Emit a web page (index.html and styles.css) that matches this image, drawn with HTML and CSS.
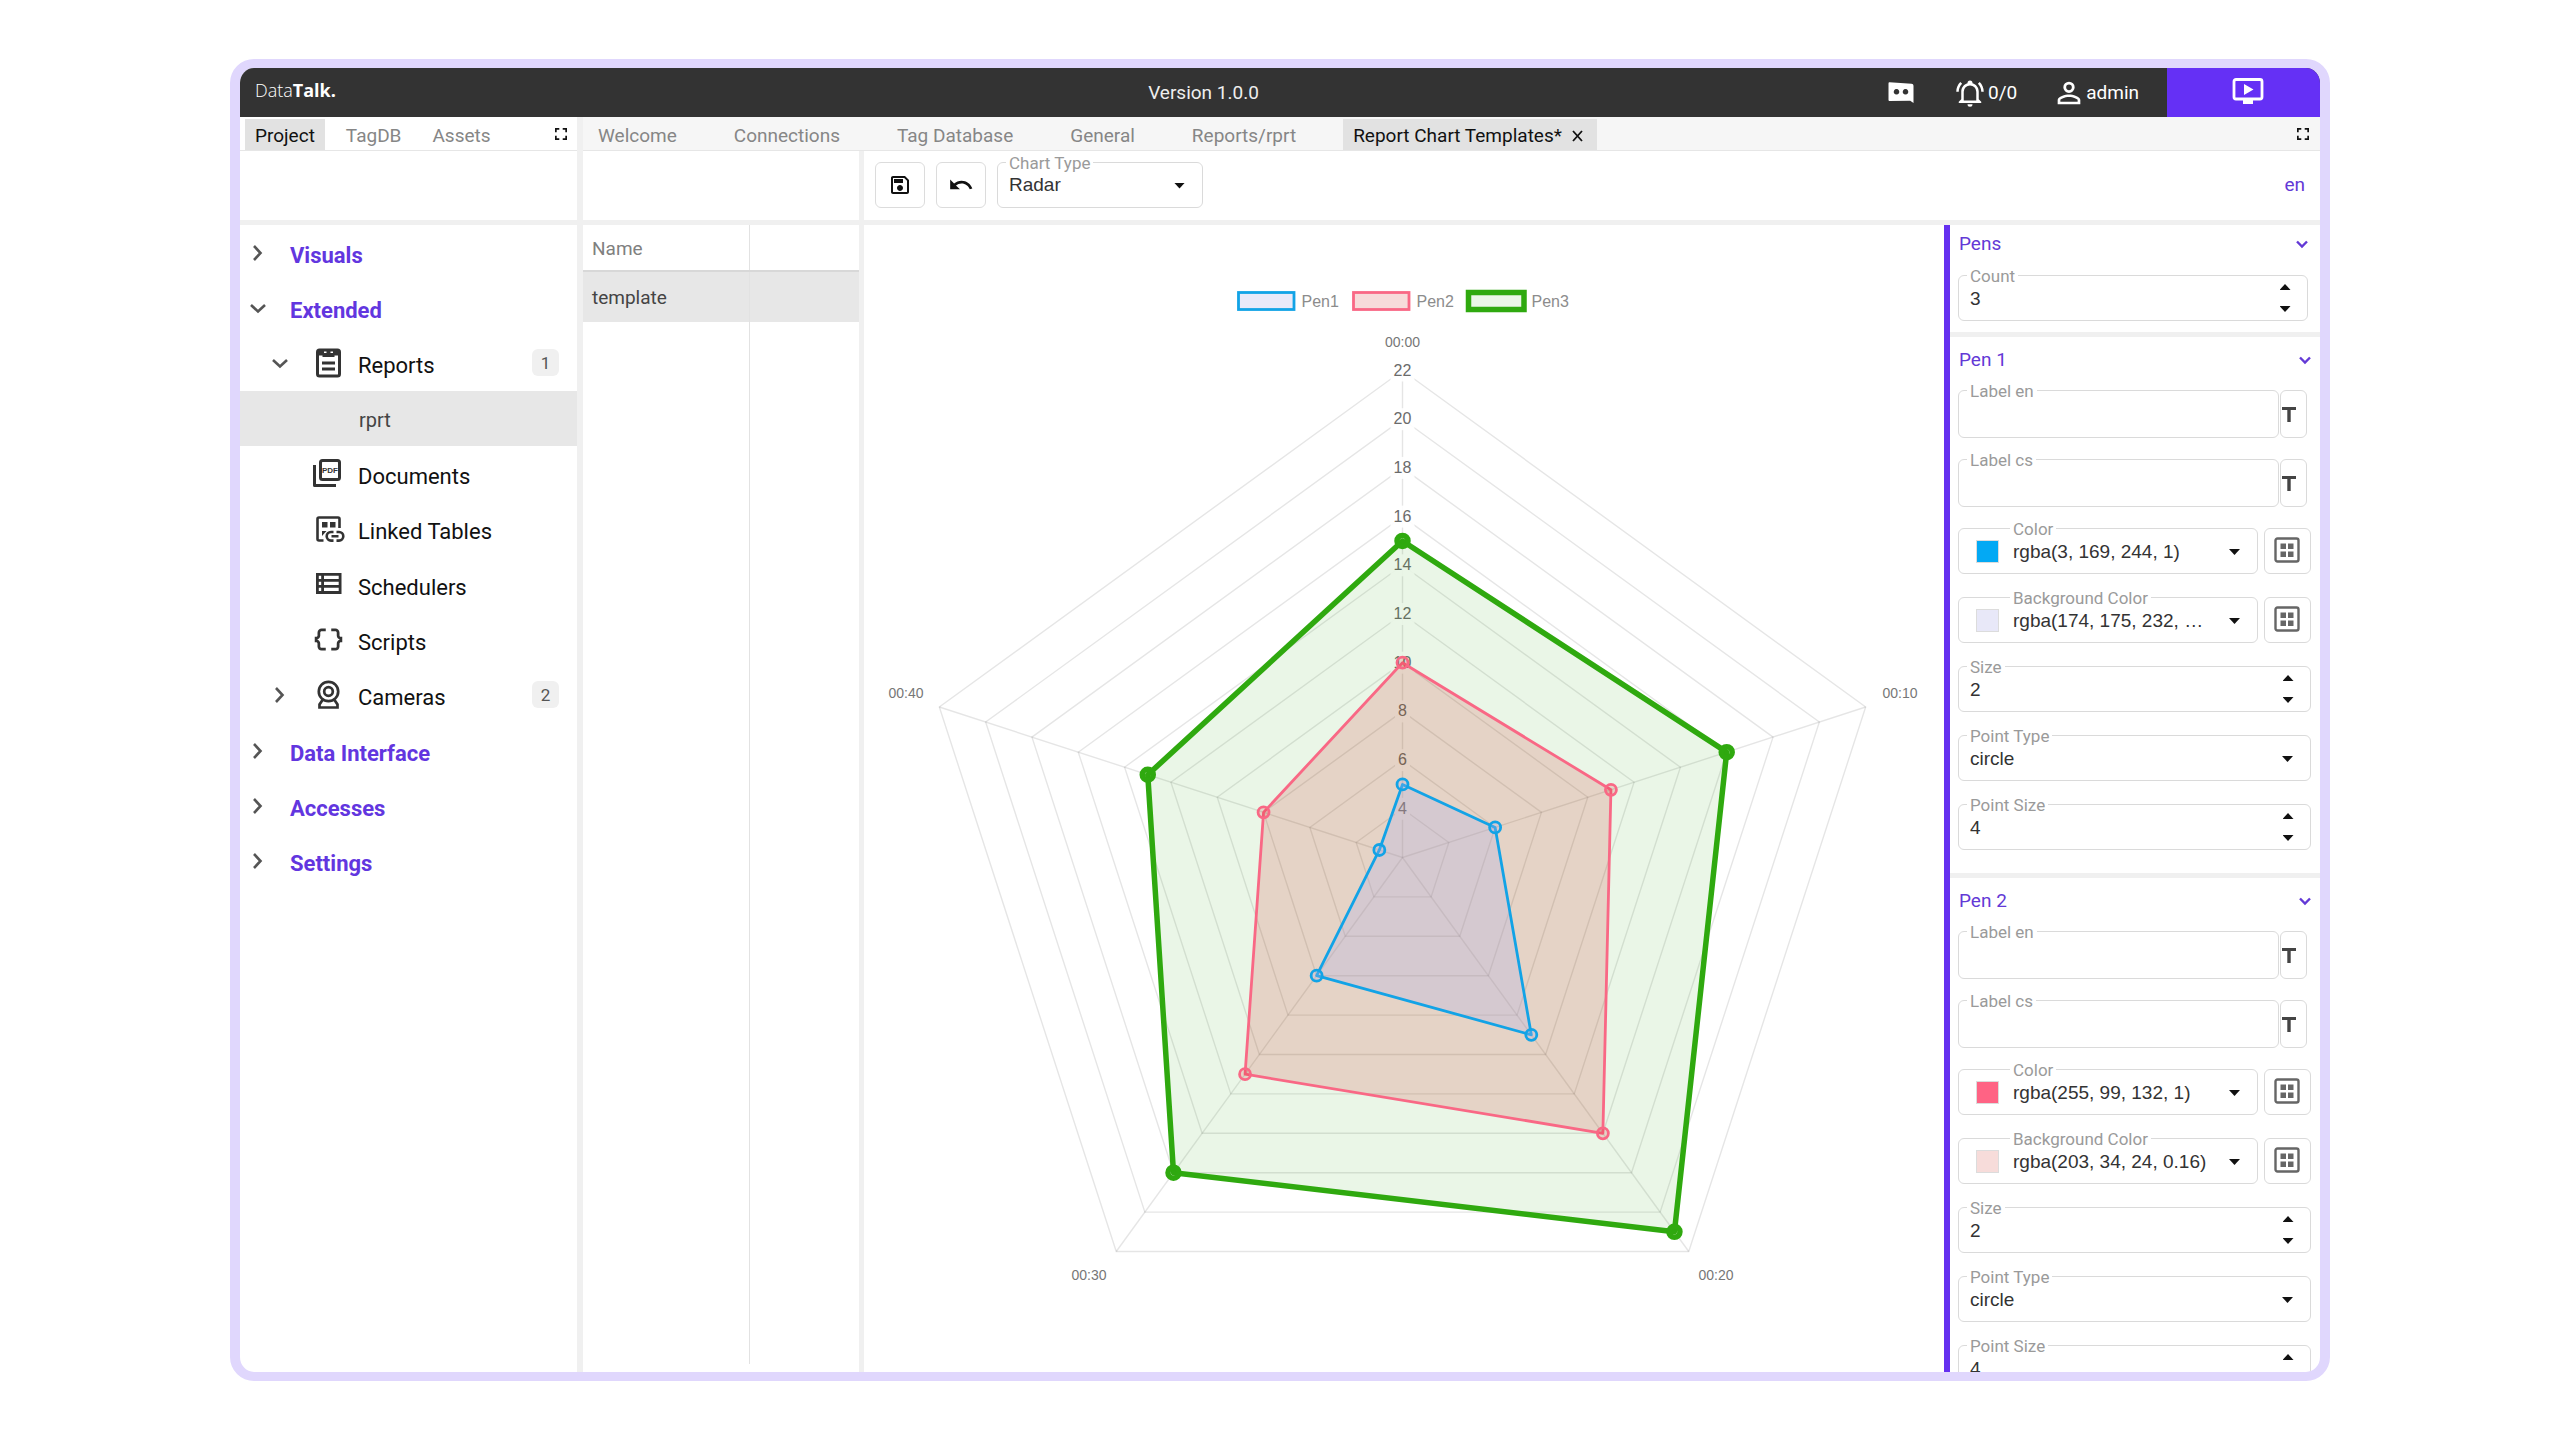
FILE: index.html
```html
<!DOCTYPE html>
<html lang="en">
<head>
<meta charset="utf-8">
<title>DataTalk – Report Chart Templates</title>
<link rel="stylesheet" href="styles.css">
</head>
<body>
<svg class="sprite" aria-hidden="true">
  <symbol id="i-right" viewBox="0 0 24 24"><path d="M8 5l6.500 7L8 19" fill="none" stroke="currentColor" stroke-width="2.600"/></symbol>
  <symbol id="i-down" viewBox="0 0 24 24"><path d="M5 9l7 6.500L19 9" fill="none" stroke="currentColor" stroke-width="2.600"/></symbol>
  <symbol id="i-fold" viewBox="0 0 12 12"><path d="M1 3.500l5 5 5-5" fill="none" stroke="currentColor" stroke-width="2.400"/></symbol>
  <symbol id="i-full" viewBox="5 5 14 14"><path d="M5 5h5v2H7v3H5V5m9 0h5v5h-2V7h-3V5m3 9h2v5h-5v-2h3v-3m-7 3v2H5v-5h2v3h3z" fill="currentColor"/></symbol>
  <symbol id="i-grid" viewBox="0 0 26 26"><rect x="1.500" y="1.500" width="23" height="23" rx="2" fill="none" stroke="currentColor" stroke-width="2.400"/><path d="M6.500 6.500h5.500v5.500H6.500zM14 6.500h5.500v5.500H14zM6.500 14.500h5.500V20H6.500zM14 14.500h5.500V20H14z" fill="currentColor"/></symbol>
  <symbol id="i-t" viewBox="0 0 14 15"><path d="M0 0h14v3H8.700v12H5.300V3H0z" fill="currentColor"/></symbol>
</svg>

<div class="app">
  <header class="topbar">
    <div class="topbar-main">
      <a class="logo" href="#">Data<b>Talk.</b></a>
      <span class="version">Version 1.0.0</span>
      <div class="status">
        <button class="status-item" aria-label="Messages">
          <svg width="26" height="21" viewBox="0 0 26 21"><path fill-rule="evenodd" fill="currentColor" d="M1.500.3L23.500 1.700q2 .1 2 2V21l-3.300-2.200L1.500 19Q.5 19 .5 18V1.500Q.5.200 1.500.3zM8.500 7a2.800 2.800 0 1 0 .01 0zM17.500 7a2.800 2.800 0 1 0 .01 0z"/></svg>
        </button>
        <button class="status-item alarms">
          <svg width="30" height="30" viewBox="0 0 24 24"><path fill="currentColor" d="M10,21H14A2,2 0 0,1 12,23A2,2 0 0,1 10,21M21,19V20H3V19L5,17V11C5,7.900 7.030,5.170 10,4.290C10,4.190 10,4.100 10,4A2,2 0 0,1 12,2A2,2 0 0,1 14,4C14,4.100 14,4.190 14,4.290C16.970,5.170 19,7.900 19,11V17L21,19M17,11A5,5 0 0,0 12,6A5,5 0 0,0 7,11V18H17V11M19.750,3.190L18.330,4.610C20.040,6.300 21,8.600 21,11H23C23,8.070 21.840,5.250 19.750,3.190M1,11H3C3,8.600 3.960,6.300 5.670,4.610L4.250,3.190C2.160,5.250 1,8.070 1,11Z"/></svg>
          <span>0/0</span>
        </button>
        <button class="status-item user">
          <svg width="34" height="34" viewBox="0 0 24 24"><path fill="currentColor" d="M12,4A4,4 0 0,1 16,8A4,4 0 0,1 12,12A4,4 0 0,1 8,8A4,4 0 0,1 12,4M12,6A2,2 0 0,0 10,8A2,2 0 0,0 12,10A2,2 0 0,0 14,8A2,2 0 0,0 12,6M12,13C14.670,13 20,14.330 20,17V20H4V17C4,14.330 9.330,13 12,13M12,14.900C9.030,14.900 5.900,16.360 5.900,17V18.100H18.100V17C18.100,16.360 14.970,14.900 12,14.900Z"/></svg>
          <span>admin</span>
        </button>
      </div>
    </div>
    <button class="run" aria-label="Run">
      <svg width="32" height="26" viewBox="0 0 32 26"><rect x="2" y="1.500" width="28" height="19.500" rx="2" fill="none" stroke="currentColor" stroke-width="2.800"/><path d="M11 22h10v4H11zM12 6l9.500 5.500L12 17z" fill="currentColor"/></svg>
    </button>
  </header>

  <div class="workspace">
    <aside class="sidebar">
      <nav class="tabs side-tabs">
        <button class="tab active">Project</button>
        <button class="tab">TagDB</button>
        <button class="tab">Assets</button>
        <button class="full" aria-label="Full screen"><svg width="12" height="12"><use href="#i-full"/></svg></button>
      </nav>
      <div class="toolbar"></div>
      <ul class="tree">
        <li class="group"><svg class="chev"><use href="#i-right"/></svg><span>Visuals</span></li>
        <li class="group"><svg class="chev"><use href="#i-down"/></svg><span>Extended</span></li>
        <li class="item"><svg class="chev"><use href="#i-down"/></svg>
          <svg class="ico" viewBox="0 0 33 33"><rect x="5.500" y="3" width="22" height="26" rx="2" fill="none" stroke="currentColor" stroke-width="3"/><path d="M6 3h6v3h2.500V3.500h4V6H21V3h7v5.500h-5.500V10h-12V8.500H6z" fill="currentColor"/><path d="M10 16h13M10 22h13" stroke="currentColor" stroke-width="2.800"/></svg>
          <span>Reports</span><em class="badge">1</em></li>
        <li class="item leaf selected"><span>rprt</span></li>
        <li class="item"><i class="chev"></i>
          <svg class="ico" viewBox="0 0 33 33"><rect x="8.500" y="3.500" width="19" height="19" rx="2" fill="none" stroke="currentColor" stroke-width="3"/><path d="M2.500 8v20.500H24" fill="none" stroke="currentColor" stroke-width="3" stroke-linejoin="round"/><text x="18" y="16" text-anchor="middle" class="pdf">PDF</text></svg>
          <span>Documents</span></li>
        <li class="item"><i class="chev"></i>
          <svg class="ico" viewBox="0 0 33 33"><path d="M11.500 27.500H7q-1.500 0-1.500-1.500V6Q5.500 4.500 7 4.500h19q1.500 0 1.500 1.500v9" fill="none" stroke="currentColor" stroke-width="2.600"/><path d="M10 9h5.500v5.500H10zM18 9h5.500v5.500H18zM10 18h4.500L10 23z" fill="currentColor"/><path d="M21.500 19H19a4.300 4.300 0 0 0 0 8.600h2.500M24.500 19H27a4.300 4.300 0 0 1 0 8.600h-2.500M19.500 23.300h7" fill="none" stroke="currentColor" stroke-width="2.600"/></svg>
          <span>Linked Tables</span></li>
        <li class="item"><i class="chev"></i>
          <svg class="ico" viewBox="0 0 33 33"><path fill-rule="evenodd" fill="currentColor" d="M4 5h25.500v21H4zM6.800 7.700v3.300h2.400V7.700zM12 7.700v3.300h14.700V7.700zM6.800 13.700V17h2.400v-3.300zM12 13.700V17h14.700v-3.300zM6.800 19.700V23h2.400v-3.300zM12 19.700V23h14.700v-3.300z"/></svg>
          <span>Schedulers</span></li>
        <li class="item"><i class="chev"></i>
          <svg class="ico" viewBox="0 0 24 24"><path fill="currentColor" d="M4 7v2c0 .55-.45 1-1 1H2v4h1c.55 0 1 .45 1 1v2c0 1.650 1.350 3 3 3h3v-2H7c-.55 0-1-.45-1-1v-2c0-1.300-.84-2.420-2-2.830v-.34C5.160 11.420 6 10.300 6 9V7c0-.55.45-1 1-1h3V4H7C5.350 4 4 5.350 4 7zm17 3c-.55 0-1-.45-1-1V7c0-1.650-1.350-3-3-3h-3v2h3c.55 0 1 .45 1 1v2c0 1.300.84 2.420 2 2.830v.34c-1.160.41-2 1.520-2 2.830v2c0 .55-.45 1-1 1h-3v2h3c1.650 0 3-1.350 3-3v-2c0-.55.45-1 1-1h1v-4h-1z"/></svg>
          <span>Scripts</span></li>
        <li class="item"><svg class="chev"><use href="#i-right"/></svg>
          <svg class="ico" viewBox="0 0 33 33"><g fill="none" stroke="currentColor" stroke-width="2.700"><circle cx="16.500" cy="12.500" r="9.700"/><circle cx="16.500" cy="12.500" r="4.300"/><path d="M10.500 21L7.500 25.500v3h18v-3L22.500 21"/></g></svg>
          <span>Cameras</span><em class="badge">2</em></li>
        <li class="group"><svg class="chev"><use href="#i-right"/></svg><span>Data Interface</span></li>
        <li class="group"><svg class="chev"><use href="#i-right"/></svg><span>Accesses</span></li>
        <li class="group"><svg class="chev"><use href="#i-right"/></svg><span>Settings</span></li>
      </ul>
    </aside>

    <main class="main">
      <nav class="tabs main-tabs">
        <button class="tab">Welcome</button>
        <button class="tab">Connections</button>
        <button class="tab">Tag Database</button>
        <button class="tab">General</button>
        <button class="tab">Reports/rprt</button>
        <button class="tab active">Report Chart Templates*
          <svg width="11" height="12" viewBox="0 0 11 12"><path d="M1 1l9 10M10 1L1 11" stroke="currentColor" stroke-width="1.800"/></svg></button>
        <button class="full" aria-label="Full screen"><svg width="12" height="12"><use href="#i-full"/></svg></button>
      </nav>
      <div class="panes">
        <section class="list">
          <div class="toolbar"></div>
          <div class="table-wrap">
            <table>
              <thead><tr><th>Name</th><th></th></tr></thead>
              <tbody>
                <tr class="selected"><td>template</td><td></td></tr>
                <tr class="rest"><td></td><td></td></tr>
              </tbody>
            </table>
          </div>
        </section>
        <section class="editor">
          <div class="toolbar">
            <button class="tool" aria-label="Save"><svg width="24" height="24" viewBox="0 0 24 24"><path fill="currentColor" d="M17 3H5C3.890 3 3 3.900 3 5V19C3 20.100 3.890 21 5 21H19C20.100 21 21 20.100 21 19V7L17 3M19 19H5V5H16.170L19 7.830V19M12 12C10.340 12 9 13.340 9 15S10.340 18 12 18 15 16.660 15 15 13.660 12 12 12M6 6H15V10H6V6Z"/></svg></button>
            <button class="tool" aria-label="Undo"><svg width="26" height="26" viewBox="0 0 24 24"><path fill="currentColor" d="M12.500,8C9.850,8 7.450,9 5.600,10.600L2,7V16H11L7.380,12.380C8.770,11.220 10.540,10.500 12.500,10.500C16.040,10.500 19.050,12.810 20.100,16L22.470,15.220C21.080,11.030 17.150,8 12.500,8Z"/></svg></button>
            <div class="field chart-type"><label for="ctype">Chart Type</label><select id="ctype"><option>Radar</option></select><i class="caret"></i></div>
            <a class="lang" href="#">en</a>
          </div>
          <div class="canvas-row">
            <div class="chart"><svg id="radar" viewBox="0 0 1080 1147"></svg></div>
            <form class="props">
              <section class="sect sect-first">
                <h2>Pens<svg width="12" height="12"><use href="#i-fold"/></svg></h2>
                <div class="rows">
                  <div class="row"><div class="field"><label for="count">Count</label><input id="count" type="number" value="3"><span class="steps"><button type="button" aria-label="More"><i class="caret up"></i></button><button type="button" aria-label="Less"><i class="caret"></i></button></span></div></div>
                </div>
              </section>
              <section class="sect">
                <h2>Pen 1<svg width="12" height="12"><use href="#i-fold"/></svg></h2>
                <div class="rows">
                  <div class="row text-row"><div class="field"><label for="p1en">Label en</label><input id="p1en" type="text"></div><button type="button" class="tbtn" aria-label="Text"><svg width="14" height="15"><use href="#i-t"/></svg></button></div>
                  <div class="row text-row"><div class="field"><label for="p1cs">Label cs</label><input id="p1cs" type="text"></div><button type="button" class="tbtn" aria-label="Text"><svg width="14" height="15"><use href="#i-t"/></svg></button></div>
                  <div class="row"><div class="field color"><label for="p1c">Color</label><i class="swatch blue"></i><select id="p1c"><option>rgba(3, 169, 244, 1)</option></select><i class="caret"></i></div><button type="button" class="gbtn" aria-label="Palette"><svg width="26" height="26"><use href="#i-grid"/></svg></button></div>
                  <div class="row"><div class="field color"><label for="p1b">Background Color</label><i class="swatch lilac"></i><select id="p1b"><option>rgba(174, 175, 232, 0.28)</option></select><i class="caret"></i></div><button type="button" class="gbtn" aria-label="Palette"><svg width="26" height="26"><use href="#i-grid"/></svg></button></div>
                  <div class="row"><div class="field"><label for="p1s">Size</label><input id="p1s" type="number" value="2"><span class="steps"><button type="button" aria-label="More"><i class="caret up"></i></button><button type="button" aria-label="Less"><i class="caret"></i></button></span></div></div>
                  <div class="row"><div class="field"><label for="p1t">Point Type</label><select id="p1t"><option>circle</option></select><i class="caret"></i></div></div>
                  <div class="row"><div class="field"><label for="p1p">Point Size</label><input id="p1p" type="number" value="4"><span class="steps"><button type="button" aria-label="More"><i class="caret up"></i></button><button type="button" aria-label="Less"><i class="caret"></i></button></span></div></div>
                </div>
              </section>
              <section class="sect">
                <h2>Pen 2<svg width="12" height="12"><use href="#i-fold"/></svg></h2>
                <div class="rows">
                  <div class="row text-row"><div class="field"><label for="p2en">Label en</label><input id="p2en" type="text"></div><button type="button" class="tbtn" aria-label="Text"><svg width="14" height="15"><use href="#i-t"/></svg></button></div>
                  <div class="row text-row"><div class="field"><label for="p2cs">Label cs</label><input id="p2cs" type="text"></div><button type="button" class="tbtn" aria-label="Text"><svg width="14" height="15"><use href="#i-t"/></svg></button></div>
                  <div class="row"><div class="field color"><label for="p2c">Color</label><i class="swatch pink"></i><select id="p2c"><option>rgba(255, 99, 132, 1)</option></select><i class="caret"></i></div><button type="button" class="gbtn" aria-label="Palette"><svg width="26" height="26"><use href="#i-grid"/></svg></button></div>
                  <div class="row"><div class="field color"><label for="p2b">Background Color</label><i class="swatch rose"></i><select id="p2b"><option>rgba(203, 34, 24, 0.16)</option></select><i class="caret"></i></div><button type="button" class="gbtn" aria-label="Palette"><svg width="26" height="26"><use href="#i-grid"/></svg></button></div>
                  <div class="row"><div class="field"><label for="p2s">Size</label><input id="p2s" type="number" value="2"><span class="steps"><button type="button" aria-label="More"><i class="caret up"></i></button><button type="button" aria-label="Less"><i class="caret"></i></button></span></div></div>
                  <div class="row"><div class="field"><label for="p2t">Point Type</label><select id="p2t"><option>circle</option></select><i class="caret"></i></div></div>
                  <div class="row"><div class="field"><label for="p2p">Point Size</label><input id="p2p" type="number" value="4"><span class="steps"><button type="button" aria-label="More"><i class="caret up"></i></button><button type="button" aria-label="Less"><i class="caret"></i></button></span></div></div>
                </div>
              </section>
            </form>
          </div>
        </section>
      </div>
    </main>
  </div>
</div>
<script src="radar.js"></script>
</body>
</html>
```
FILE: styles.css
```css
* { box-sizing: border-box; }

body {
  margin: 0;
  height: 100vh;
  padding: 59px 230px;
  background: #fff;
  color: #111;
  font: 19px/24px Roboto, "Liberation Sans", sans-serif;
}

button, input, select {
  font: inherit;
  color: inherit;
  background: none;
  border: 0;
  border-radius: 0;
  margin: 0;
  padding: 0;
  outline: 0;
}
i, em { font-style: normal; }
a { text-decoration: none; }
svg { display: block; flex: none; }
.sprite { position: absolute; width: 0; height: 0; }

.app {
  height: 100%;
  display: flex;
  flex-direction: column;
  border: solid #e0d7fd;
  border-width: 9px 10px;
  border-radius: 24px;
  overflow: hidden;
}

/* top bar */
.topbar { display: flex; flex: none; height: 49px; background: #333; color: #fff; }
.topbar-main {
  flex: 1;
  display: grid;
  grid-template-columns: 1fr auto 1fr;
  align-items: center;
  padding: 0 15px;
}
.logo { color: #fff; font: 300 18px/24px "Open Sans", sans-serif; padding-bottom: 6px; }
.logo b { font-weight: 700; }
.version { color: #eee; }
.status { display: flex; justify-content: flex-end; align-items: center; margin-right: 13px; }
.status-item { display: flex; align-items: center; gap: 3px; height: 32px; color: #fff; }
.status-item.alarms { margin-left: 41px; }
.status-item.user { gap: 0; margin-left: 35px; }
.run { width: 153px; display: flex; justify-content: center; align-items: center; padding: 0 0 4px 8px; background: #6530f5; color: #fff; }

/* shell */
.workspace { flex: 1; min-height: 0; display: flex; }
.sidebar { width: 343px; flex: none; border-right: 6px solid #f0f0f0; }
.main { flex: 1; min-width: 0; display: flex; flex-direction: column; }

.tabs { display: flex; flex: none; height: 34px; padding-top: 2px; border-bottom: 1px solid #e6e6e6; }
.tab { display: flex; align-items: center; padding: 2px 10px 0; color: #868686; white-space: nowrap; }
.tab.active { background: #e2e2e2; color: #111; }
.side-tabs { gap: 11px; padding-left: 5px; padding-right: 10px; }
.main-tabs { gap: 12px; padding-left: 5px; padding-right: 11px; background: #f6f6f6; }
.main-tabs .tab { padding-right: 35px; }
.main-tabs .tab.active { padding-right: 14px; gap: 10px; }
.full { margin-left: auto; padding-bottom: 2px; color: #111; }

.toolbar { display: flex; align-items: center; gap: 11px; height: 74px; flex: none; padding: 0 15px 2px 11px; border-bottom: 5px solid #f0f0f0; }
.tool { width: 50px; height: 46px; display: flex; align-items: center; justify-content: center; border: 1px solid #dcdcdc; border-radius: 6px; color: #111; }
.lang { margin-left: auto; color: #6339d6; }

/* tree */
.tree { list-style: none; margin: 0; padding: 0; height: 664px; display: grid; grid-auto-rows: 1fr; font-size: 22px; line-height: 28px; }
.tree li { display: flex; align-items: center; }
.chev { width: 24px; height: 24px; color: #555; flex: none; }
.ico { width: 33px; height: 33px; color: #333; margin-left: 20px; }
.pdf { font: 700 8px "Liberation Sans", sans-serif; fill: currentColor; }
.group { padding-left: 6px; gap: 20px; color: #6236df; font-weight: 700; }
.group span { padding-top: 6px; }
.item { padding-left: 28px; padding-right: 18px; color: #111; }
.item span { padding: 6px 0 0 13px; }
.tree .leaf { padding-left: 106px; font-size: 20px; color: #444; }
.leaf span { padding-top: 3px; }
.selected { background: #e7e7e7; }
.badge { margin-left: auto; margin-bottom: 2px; width: 27px; height: 27px; border-radius: 6px; background: #f0f0f0; color: #555; font-size: 17px; line-height: 28px; text-align: center; }

/* list */
.panes { flex: 1; min-height: 0; display: flex; }
.list { width: 281px; flex: none; display: flex; flex-direction: column; border-right: 5px solid #f0f0f0; }
.table-wrap { flex: 1; padding-bottom: 8px; display: flex; }
table { width: 100%; border-collapse: collapse; table-layout: fixed; }
th, td { text-align: left; font-weight: 400; padding: 2px 9px 0; color: #444; }
th:first-child, td:first-child { width: 166px; border-right: 1px solid #e2e2e2; }
th { height: 46px; color: #808080; border-bottom: 2px solid #d8d8d8; }
tr.selected td { height: 51px; }

/* editor */
.editor { flex: 1; min-width: 0; display: flex; flex-direction: column; }
.canvas-row { flex: 1; min-height: 0; display: flex; }
.chart { flex: 1; min-width: 0; }
.chart svg { width: 100%; height: 100%; }
.chart text { font-family: "Liberation Sans", sans-serif; text-anchor: middle; }
.grid-line { fill: none; stroke: #000; stroke-opacity: .1; stroke-width: 1.400; }
.tick-back { fill: #fff; fill-opacity: .9; }
.tick { font-size: 16px; fill: #6b6b6b; }
.axis { font-size: 14px; fill: #777; }
.chart .legend { font-size: 16px; fill: #8c8c8c; text-anchor: start; }

.props { width: 376px; flex: none; border-left: 6px solid #6530f0; overflow: hidden; }
.sect { border-bottom: 5px solid #f0f0f0; padding: 0 9px 0 8px; }
.sect h2 { display: flex; align-items: center; justify-content: space-between; margin: 0; height: 53px; padding: 0 0 8px 1px; font-size: 19px; font-weight: 400; color: #6339d6; }
.sect-first { padding-right: 12px; }
.sect-first h2 { height: 50px; padding-bottom: 12px; }
.rows { display: grid; grid-template-columns: minmax(0, 1fr); grid-auto-rows: 69px; }
.sect-first .rows { grid-auto-rows: 57px; }
.row { display: flex; align-items: flex-start; gap: 6px; }
.text-row { gap: 1px; padding-right: 4px; }

.field { position: relative; flex: 1; min-width: 0; height: 46px; display: flex; border: 1px solid #dadada; border-radius: 6px; font-family: "Liberation Sans", sans-serif; color: #333; }
.field.chart-type { flex: none; width: 206px; }
.text-row .field { height: 48px; }
.field label { position: absolute; left: 8px; top: -10px; padding: 0 3px; background: #fff; color: #9a9a9a; font: 17px/20px Roboto, sans-serif; white-space: nowrap; }
.field input, .field select { flex: 1; min-width: 0; height: 100%; padding-left: 11px; padding-top: 1px; appearance: none; }
.field input[type=number] { appearance: textfield; }
.field input::-webkit-inner-spin-button { appearance: none; margin: 0; }
.field select { padding-right: 46px; text-overflow: ellipsis; overflow: hidden; white-space: nowrap; }
.field.color label { left: 51px; }
.field.color select { padding-left: 54px; }
.caret { width: 11px; height: 6px; background: #111; clip-path: polygon(0 0, 100% 0, 50% 100%); }
.caret.up { clip-path: polygon(0 100%, 100% 100%, 50% 0); }
.field > .caret { position: absolute; right: 17px; top: 20px; }
.steps { display: flex; flex-direction: column; width: 22px; margin-right: 11px; }
.steps button { flex: 1; display: flex; align-items: center; justify-content: center; }
.swatch { position: absolute; left: 17px; top: 11px; width: 23px; height: 23px; border: 1px solid #dcdcdc; }
.blue { background: #03a9f4; }
.lilac { background: #e8e8f8; }
.pink { background: #ff6384; }
.rose { background: #f7dcda; }
.tbtn { width: 27px; height: 48px; display: flex; align-items: center; padding-left: 1px; border: 1px solid #dadada; border-radius: 6px; color: #444; }
.gbtn { width: 47px; height: 46px; display: flex; align-items: center; justify-content: center; padding: 0 2px 2px 0; border: 1px solid #dadada; border-radius: 6px; color: #666; }
```
FILE: radar.js
```js
const NS = 'http://www.w3.org/2000/svg';
const root = document.getElementById('radar');
const center = { x: 538.5, y: 632.5 };
const radius = 487;
const min = 2, max = 22, step = 2;

const pens = [
  { name: 'Pen1', line: '#12a3e6', fill: 'rgba(174,175,232,.28)', size: 2.8, data: [5, 6, 11, 8, 3] },
  { name: 'Pen2', line: '#f96885', fill: 'rgba(203,34,24,.16)', size: 2.8, data: [10, 11, 16, 13, 8] },
  { name: 'Pen3', line: '#2fa90f', fill: 'rgba(47,169,15,.1)', size: 5.5, data: [15, 16, 21, 18, 13] },
];
const axes = [
  { text: '00:00', x: 538.5, y: 122 },
  { text: '00:10', x: 1036, y: 473 },
  { text: '00:20', x: 852, y: 1055 },
  { text: '00:30', x: 225, y: 1055 },
  { text: '00:40', x: 42, y: 473 },
];

function add(tag, attrs, text) {
  const el = document.createElementNS(NS, tag);
  for (const key in attrs) el.setAttribute(key, attrs[key]);
  if (text !== undefined) el.textContent = text;
  root.appendChild(el);
}
function at(axis, value) {
  const angle = axis * 2 * Math.PI / 5;
  const r = radius * (value - min) / (max - min);
  return [center.x + r * Math.sin(angle), center.y - r * Math.cos(angle)];
}
function ring(values) {
  return values.map((v, i) => at(i, v).join()).join(' ');
}

for (let v = min + step; v <= max; v += step) {
  add('polygon', { points: ring([v, v, v, v, v]), class: 'grid-line' });
}
for (let i = 0; i < 5; i++) {
  add('polyline', { points: at(i, min).join() + ' ' + at(i, max).join(), class: 'grid-line' });
}
for (let v = min + step; v <= max; v += step) {
  const y = at(0, v)[1];
  const w = v < 10 ? 15 : 24;
  add('rect', { x: center.x - w / 2, y: y - 11, width: w, height: 22, class: 'tick-back' });
  add('text', { x: center.x, y: y + 5, class: 'tick' }, v);
}
for (const pen of [...pens].reverse()) {
  add('polygon', { points: ring(pen.data), fill: pen.fill, stroke: pen.line, 'stroke-width': pen.size, 'stroke-linejoin': 'round' });
  pen.data.forEach((v, i) => {
    const [cx, cy] = at(i, v);
    add('circle', { cx, cy, r: 5.5, fill: pen.fill, stroke: pen.line, 'stroke-width': pen.size });
  });
}
for (const a of axes) add('text', { x: a.x, y: a.y, class: 'axis' }, a.text);

pens.forEach((pen, i) => {
  const x = 374.5 + i * 115;
  add('rect', { x, y: 67.5, width: 55.5, height: 17, fill: pen.fill, stroke: pen.line, 'stroke-width': pen.size });
  add('text', { x: x + 63, y: 82, class: 'legend' }, pen.name);
});
```
